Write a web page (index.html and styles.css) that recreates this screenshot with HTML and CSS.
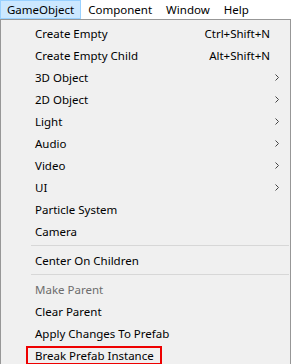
FILE: index.html
```html
<!DOCTYPE html>
<html lang="en">
<head>
    <meta charset="UTF-8">
    <meta name="viewport" content="width=device-width, initial-scale=1.0">
    <title>GameObject menu</title>
    <link rel="stylesheet" href="styles.css">
</head>
<body>
    <div class="menubar">
        <span class="menubar-item active">GameObject</span>
        <span class="menubar-item">Component</span>
        <span class="menubar-item">Window</span>
        <span class="menubar-item">Help</span>
    </div>

    <div class="dropdown">
        <div class="item"><span class="label">Create Empty</span><span class="shortcut">Ctrl+Shift+N</span><span class="arrow"></span></div>
        <div class="item"><span class="label">Create Empty Child</span><span class="shortcut">Alt+Shift+N</span><span class="arrow"></span></div>
        <div class="item"><span class="label">3D Object</span><span class="arrow"><svg width="4" height="7" viewBox="0 0 4 7"><path d="M0.5 0.5 L3.5 3.5 L0.5 6.5" /></svg></span></div>
        <div class="item"><span class="label">2D Object</span><span class="arrow"><svg width="4" height="7" viewBox="0 0 4 7"><path d="M0.5 0.5 L3.5 3.5 L0.5 6.5" /></svg></span></div>
        <div class="item"><span class="label">Light</span><span class="arrow"><svg width="4" height="7" viewBox="0 0 4 7"><path d="M0.5 0.5 L3.5 3.5 L0.5 6.5" /></svg></span></div>
        <div class="item"><span class="label">Audio</span><span class="arrow"><svg width="4" height="7" viewBox="0 0 4 7"><path d="M0.5 0.5 L3.5 3.5 L0.5 6.5" /></svg></span></div>
        <div class="item"><span class="label">Video</span><span class="arrow"><svg width="4" height="7" viewBox="0 0 4 7"><path d="M0.5 0.5 L3.5 3.5 L0.5 6.5" /></svg></span></div>
        <div class="item"><span class="label">UI</span><span class="arrow"><svg width="4" height="7" viewBox="0 0 4 7"><path d="M0.5 0.5 L3.5 3.5 L0.5 6.5" /></svg></span></div>
        <div class="item"><span class="label">Particle System</span><span class="arrow"></span></div>
        <div class="item"><span class="label">Camera</span><span class="arrow"></span></div>
        <div class="separator"></div>
        <div class="item"><span class="label">Center On Children</span><span class="arrow"></span></div>
        <div class="separator"></div>
        <div class="item disabled"><span class="label">Make Parent</span><span class="arrow"></span></div>
        <div class="item"><span class="label">Clear Parent</span><span class="arrow"></span></div>
        <div class="item"><span class="label">Apply Changes To Prefab</span><span class="arrow"></span></div>
        <div class="item"><span class="label"><span class="marked">Break Prefab Instance</span></span><span class="arrow"></span></div>
    </div>
</body>
</html>
```

FILE: styles.css
```css
body {
    margin: 0;
    padding: 0;
    height: 364px;
    background-color: #fff;
    font-family: "Noto Sans", "Open Sans", sans-serif;
    font-size: 11.5px;
    color: #000;
    overflow: hidden;
    display: flex;
    flex-direction: column;
}

.menubar {
    display: flex;
    height: 19px;
    flex-shrink: 0;
    background-color: #fff;
}

.menubar-item {
    display: flex;
    align-items: center;
    padding: 0 6px;
    border: 1px solid transparent;
    line-height: 17px;
}

.menubar-item.active {
    background-color: #cce8ff;
    border-color: #99d1ff;
}

.dropdown {
    flex: 1;
    background-color: #f0f0f0;
    border: 1px solid #979797;
    border-bottom: none;
    padding-top: 2px;
}

.item {
    display: flex;
    align-items: center;
    height: 22px;
    padding-left: 34px;
}

.item .label {
    flex: 1;
    white-space: nowrap;
}

.item .shortcut {
    white-space: nowrap;
}

.item .arrow {
    width: 20px;
    display: flex;
    align-items: center;
    padding-left: 5px;
    box-sizing: border-box;
}

.arrow svg path {
    fill: none;
    stroke: #444;
    stroke-width: 1;
}

.item.disabled {
    color: #6d6d6d;
}

.separator {
    height: 7px;
    padding-top: 3px;
    box-sizing: border-box;
    margin: 0 1px 0 30px;
}

.separator::after {
    content: "";
    display: block;
    height: 1px;
    background-color: #d7d7d7;
}

.marked {
    display: inline-block;
    margin-left: -9px;
    padding: 0 6px 0 7px;
    border: 2px solid #ee0000;
    line-height: 15px;
}
```
